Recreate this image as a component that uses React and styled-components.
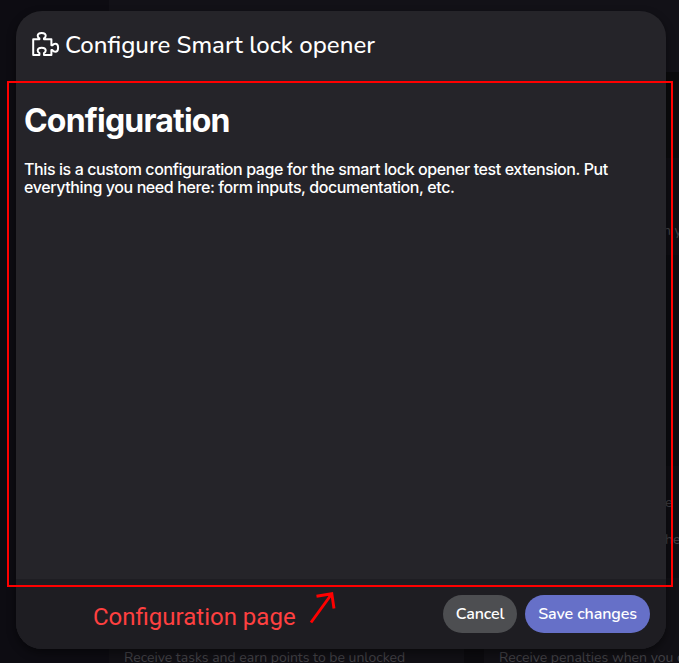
import React from "react";
import styled, { createGlobalStyle } from "styled-components";

const GlobalStyle = createGlobalStyle`
  * { box-sizing: border-box; }
  body { margin: 0; background: #0d0c12; overflow: hidden; }
`;

const rounded = `Nunito, Lato, "Open Sans", sans-serif`;

const Screen = styled.div`
  position: relative;
  width: 679px;
  height: 663px;
  overflow: hidden;
  background: #0d0c12;
  font-family: ${rounded};
`;

const Page = styled.div`
  display: grid;
  grid-template-columns: 109px 1fr;
  height: 100%;
`;

const Sidebar = styled.div`
  background: #0d0c12;
`;

const Main = styled.div`
  display: grid;
  grid-template-rows: 72px 86px 97px 211px 112px 1fr;
  background: #0c0b0f;
`;

const Band = styled.div`
  display: flex;
  justify-content: flex-end;
  overflow: hidden;
  background: ${(p) => p.$tone};
`;

const Peek = styled.span`
  display: block;
  width: 20px;
  padding-top: ${(p) => p.$top}px;
  padding-left: ${(p) => p.$left || 0}px;
  white-space: nowrap;
  font-size: 14px;
  line-height: 18px;
  color: #424146;
`;

const PeekColumn = styled.div`
  display: flex;
  flex-direction: column;
`;

const Cards = styled.div`
  display: grid;
  grid-template-columns: 355px 1fr;
  gap: 20px;
`;

const Card = styled.div`
  min-width: 0;
  background: #111015;
  padding: 71px 0 0 15px;
  overflow: hidden;
  white-space: nowrap;
  font-size: 14px;
  line-height: 18px;
  color: #424146;
`;

const Modal = styled.section`
  position: absolute;
  left: 16px;
  top: 11px;
  width: 650px;
  height: 638px;
  display: flex;
  flex-direction: column;
  border-radius: 26px;
  overflow: hidden;
  background: #252429;
  color: #fff;
  box-shadow: 0 4px 10px rgba(0, 0, 0, 0.45);
`;

const Header = styled.header`
  display: flex;
  align-items: center;
  height: 70px;
  padding: 0 15px 2px;
  gap: 5px;
`;

const Puzzle = styled.svg`
  flex: none;
  margin-bottom: 2px;
`;

const Title = styled.h2`
  margin: 0;
  font-size: 24px;
  font-weight: 500;
  line-height: 32px;
  white-space: nowrap;
`;

const Content = styled.div`
  flex: 1;
  padding: 21px 8px 0;
  font-family: Inter, sans-serif;
`;

const Heading = styled.h1`
  margin: 0;
  font-size: 32px;
  font-weight: 700;
  line-height: 38px;
  letter-spacing: -0.8px;
  white-space: nowrap;
`;

const Copy = styled.p`
  margin: 20px 0 0;
  font-size: 16px;
  font-weight: 450;
  line-height: 18px;
  letter-spacing: -0.4px;
  white-space: nowrap;
`;

const Footer = styled.footer`
  display: flex;
  justify-content: flex-end;
  gap: 8px;
  height: 70px;
  padding: 16px;
  background: #1e1d22;
`;

const Button = styled.button`
  width: ${(p) => p.$width}px;
  height: 38px;
  padding: 0;
  border: 0;
  border-radius: 19px;
  background: ${(p) => (p.$primary ? "#6670c8" : "#4d4e51")};
  color: #fff;
  font-family: ${rounded};
  font-size: 16px;
  font-weight: 600;
  letter-spacing: -0.1px;
  white-space: nowrap;
`;

const Highlight = styled.div`
  position: absolute;
  left: 7px;
  top: 81px;
  width: 666px;
  height: 506px;
  border: 2px solid #ff0000;
`;

const Note = styled.div`
  position: absolute;
  left: 93px;
  top: 591px;
  font-family: Roboto, sans-serif;
  font-size: 24px;
  line-height: 52px;
  white-space: nowrap;
  color: #ff4040;
`;

const Arrow = styled.svg`
  position: absolute;
  left: 307px;
  top: 588px;
`;

function PuzzleIcon() {
  return (
    <Puzzle width="29" height="28" viewBox="0 0 29 28" fill="none" stroke="#fff" strokeWidth="2" strokeLinejoin="round">
      <path d="M2.2 9.2H8.4V8.3C7.2 7.6 6.7 6.7 6.7 5.7C6.7 3.8 8.4 2.9 10.7 2.9S14.7 3.8 14.7 5.7C14.7 6.7 14.2 7.6 13 8.3V9.2H20.4V15.3H21.4C22.2 14.2 23.2 13.7 24.3 13.7C26.2 13.7 27.1 15.5 27.1 17.7S26.2 21.7 24.3 21.7C23.2 21.7 22.2 21.2 21.4 20.1H20.4V25H13V23.1C14.2 22.4 14.7 21.5 14.7 20.6C14.7 18.7 13 17.8 10.7 17.8S6.7 18.7 6.7 20.6C6.7 21.5 7.2 22.4 8.4 23.1V25H2.2Z" />
    </Puzzle>
  );
}

export default function App() {
  return (
    <Screen>
      <GlobalStyle />
      <Page>
        <Sidebar />
        <Main>
          <Band $tone="#121117" />
          <Band $tone="#0b0b0d" />
          <Band $tone="#0e0d12">
            <Peek $top={64} $left={4}>n you</Peek>
          </Band>
          <Band $tone="#0b0b0f" />
          <Band $tone="#0e0d12">
            <PeekColumn>
              <Peek $top={28} $left={6}>e</Peek>
              <Peek $top={19} $left={6}>he</Peek>
            </PeekColumn>
          </Band>
          <Cards>
            <Card>Receive tasks and earn points to be unlocked</Card>
            <Card>Receive penalties when you don’t</Card>
          </Cards>
        </Main>
      </Page>
      <Modal>
        <Header>
          <PuzzleIcon />
          <Title>Configure Smart lock opener</Title>
        </Header>
        <Content>
          <Heading>Configuration</Heading>
          <Copy>
            This is a custom configuration page for the smart lock opener test extension. Put
            <br />
            everything you need here: form inputs, documentation, etc.
          </Copy>
        </Content>
        <Footer>
          <Button $width={74}>Cancel</Button>
          <Button $primary $width={125}>Save changes</Button>
        </Footer>
      </Modal>
      <Highlight />
      <Note>Configuration page</Note>
      <Arrow width="34" height="40" viewBox="0 0 34 40" fill="none" stroke="#ff0000" strokeWidth="2.9">
        <path d="M4 34.5L24.3 6.5M9.5 8.2L24.8 5.7L27 20.5" />
      </Arrow>
    </Screen>
  );
}
